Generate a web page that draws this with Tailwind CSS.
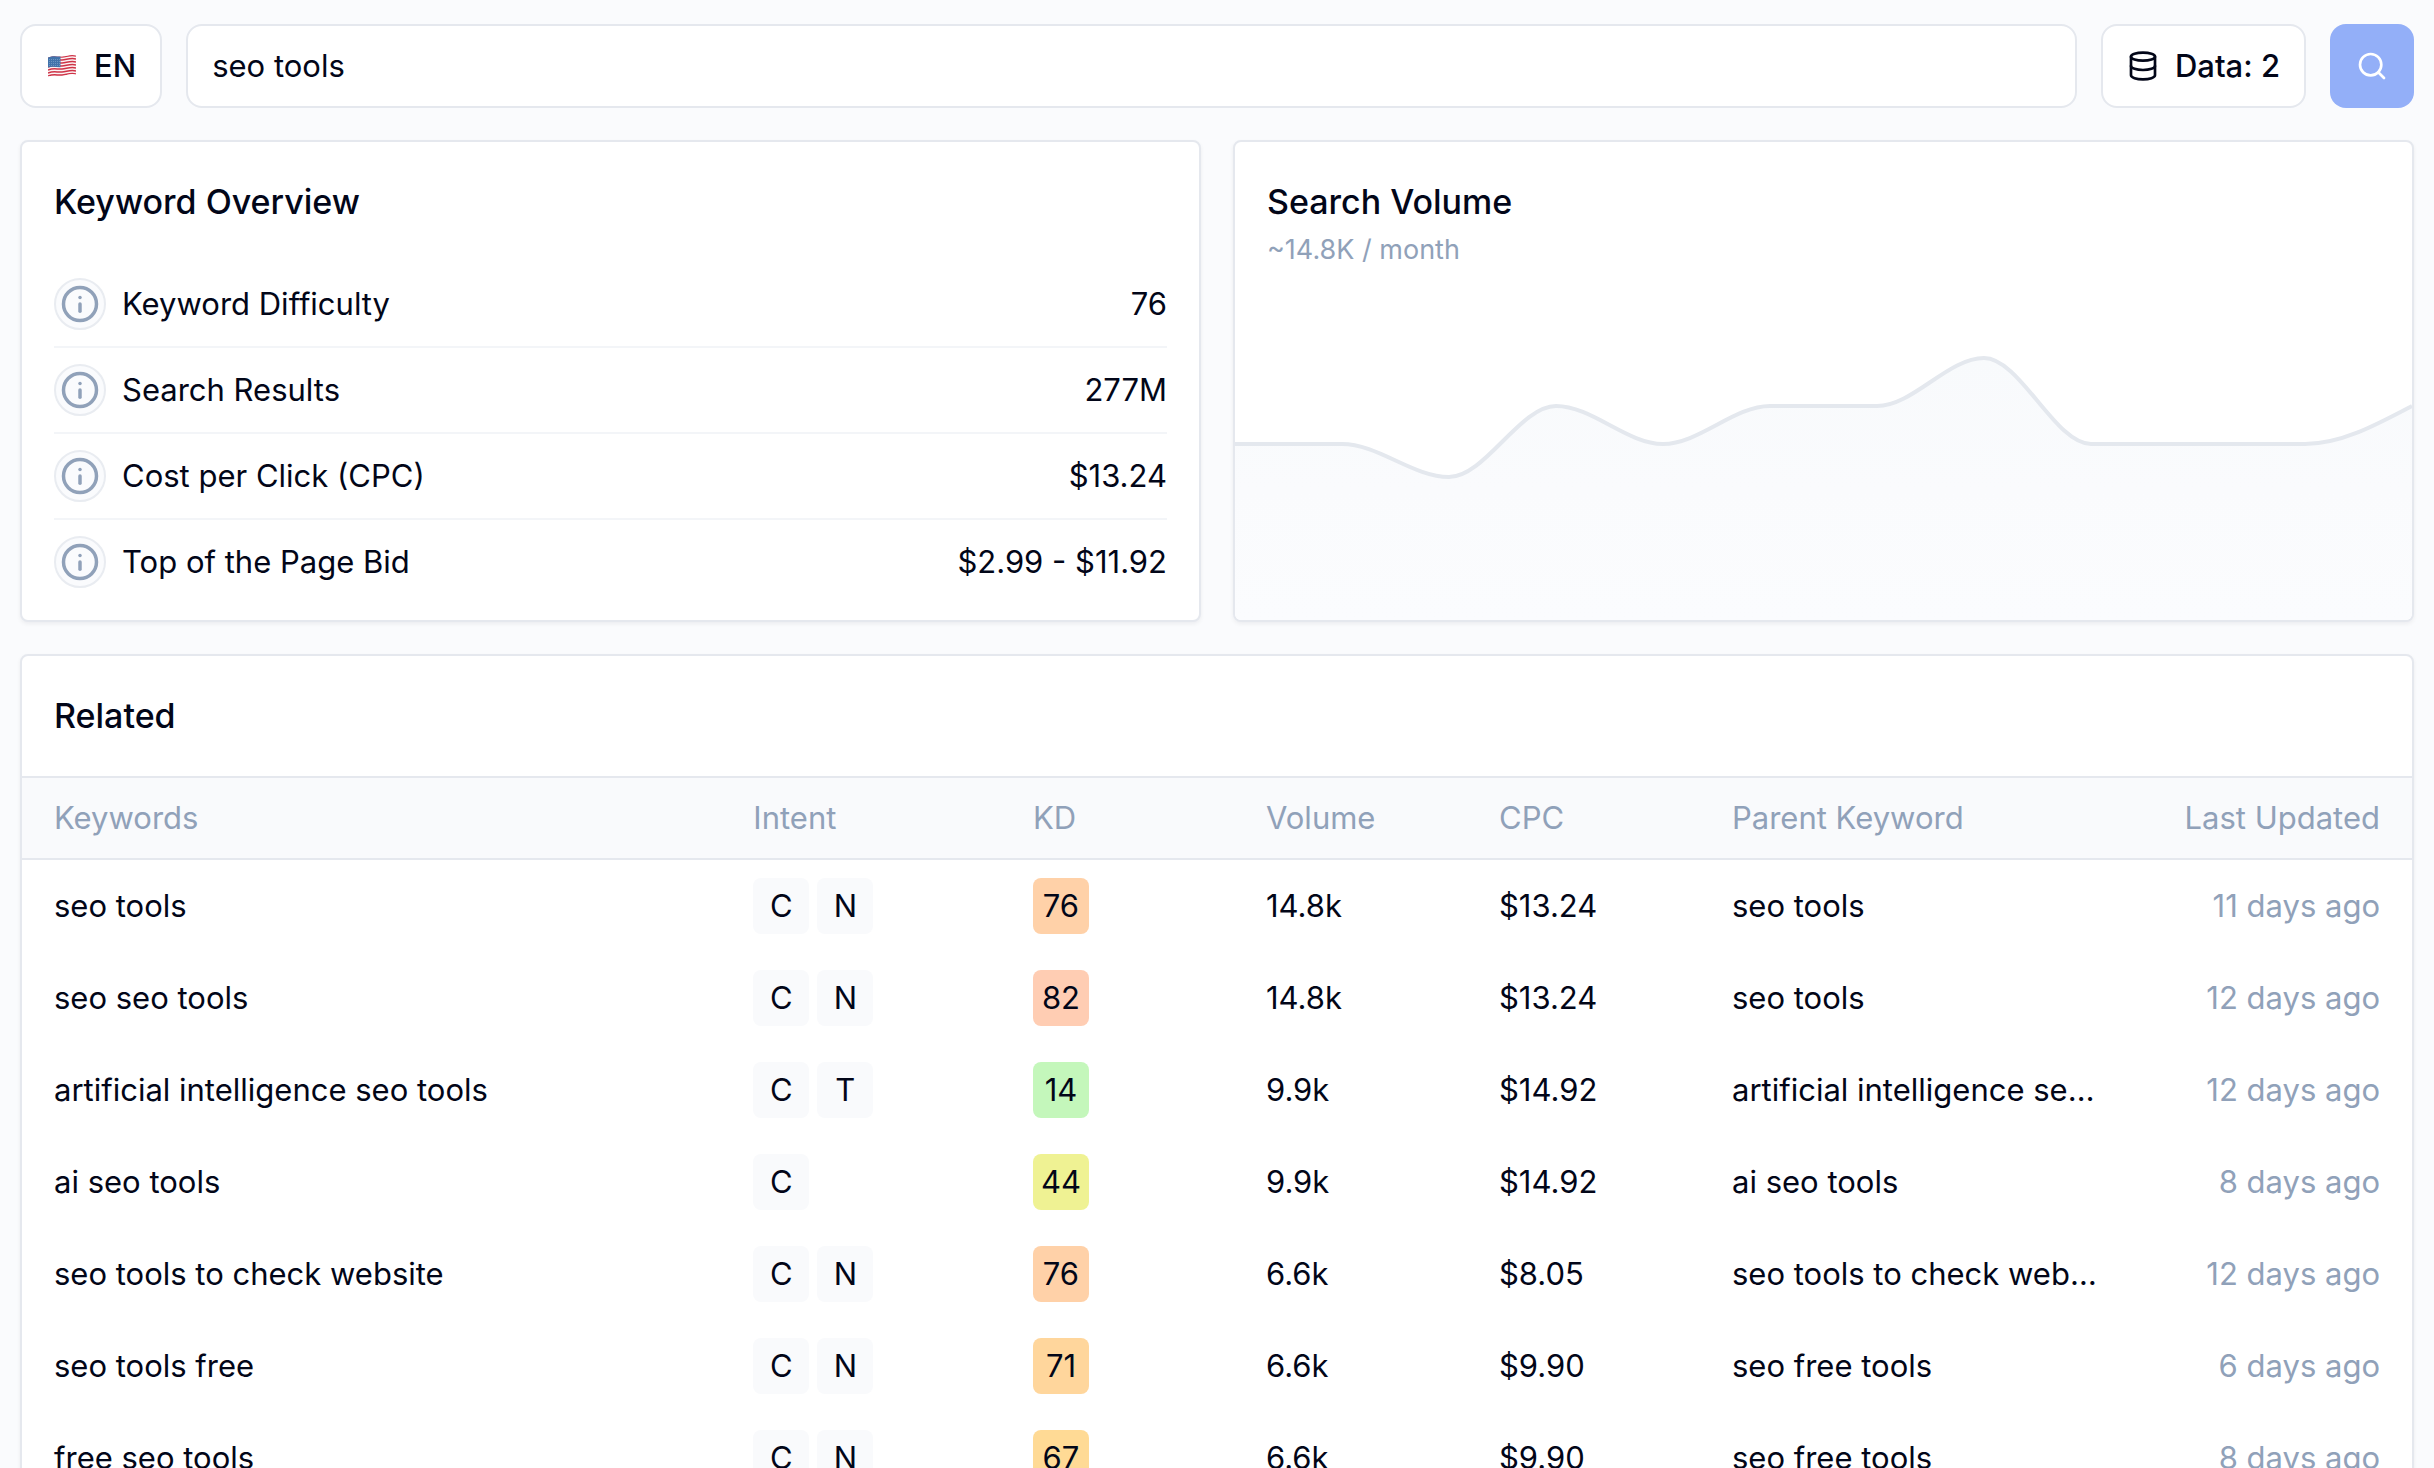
<!DOCTYPE html>
<html lang="en">
<head>
<meta charset="utf-8">
<meta name="viewport" content="width=device-width, initial-scale=1">
<title>Keyword Research</title>
<script src="https://cdn.jsdelivr.net/npm/@tailwindcss/browser@4"></script>
</head>
<body class="flex h-screen flex-col gap-8 overflow-hidden bg-[#fafbfd] px-5 pt-6 font-['Inter',sans-serif] text-[31px] leading-10 text-slate-950">

  <form class="flex h-[84px] shrink-0 gap-6">
    <button type="button" class="flex items-center gap-4 rounded-2xl border-2 border-[#e5e8ee] bg-white px-6 font-medium">
      <svg class="size-8" viewBox="0 0 32 32" aria-hidden="true">
        <defs><clipPath id="flag"><path d="M2 7.500C8 5 11 7 16 6.500S25 4 30 5.500V24.500C25 23 21 25 16 26S7 25 2 26.500Z"/></clipPath></defs>
        <g clip-path="url(#flag)">
          <rect width="32" height="32" fill="#fbf3f4"/>
          <g fill="none" stroke="#cf3347" stroke-width="1.500">
            <path d="M2 8C8 5.500 11 7.500 16 7S25 4.500 30 6"/>
            <path d="M2 11C8 8.500 11 10.500 16 10S25 7.500 30 9"/>
            <path d="M2 14C8 11.500 11 13.500 16 13S25 10.500 30 12"/>
            <path d="M2 17C8 14.500 11 16.500 16 16S25 13.500 30 15"/>
            <path d="M2 20C8 17.500 11 19.500 16 19S25 16.500 30 18"/>
            <path d="M2 23C8 20.500 11 22.500 16 22S25 19.500 30 21"/>
            <path d="M2 26C8 23.500 11 25.500 16 25S25 22.500 30 24"/>
          </g>
          <path d="M2 5H14.500V17.200C10 17.500 7 16 2 17.500Z" fill="#4173ab"/>
          <g fill="none" stroke="#8fb0d4" stroke-width=".7" stroke-dasharray=".8 1.200">
            <path d="M3 9.500H14M3 11.500H14M3 13.500H14M3 15.500H14"/>
          </g>
        </g>
      </svg>
      EN
    </button>
    <input type="text" value="seo tools" aria-label="Keyword" class="min-w-0 flex-1 rounded-2xl border-2 border-[#e5e8ee] bg-white px-6 outline-none">
    <button type="button" class="flex items-center gap-4 rounded-2xl border-2 border-[#e5e8ee] bg-white px-6 font-medium">
      <svg class="size-8" viewBox="0 0 24 24" fill="none" stroke="currentColor" stroke-width="2" stroke-linecap="round" stroke-linejoin="round" aria-hidden="true"><ellipse cx="12" cy="5" rx="9" ry="3"/><path d="M3 5V19A9 3 0 0 0 21 19V5"/><path d="M3 12A9 3 0 0 0 21 12"/></svg>
      Data: 2
    </button>
    <button type="submit" aria-label="Search" class="flex w-[84px] items-center justify-center rounded-2xl bg-[#93aff8] text-white">
      <svg class="size-8" viewBox="0 0 24 24" fill="none" stroke="currentColor" stroke-width="2" stroke-linecap="round" stroke-linejoin="round" aria-hidden="true"><circle cx="11" cy="11" r="8"/><path d="m21 21-4.300-4.300"/></svg>
    </button>
  </form>

  <div class="grid shrink-0 grid-cols-2 gap-8">
    <section class="rounded-lg border-2 border-[#e5e8ee] bg-white px-8 pb-4 shadow-[0_2px_4px_rgba(15,23,42,0.06)]">
      <h2 class="flex h-[120px] items-center text-[34px] leading-11 font-medium">Keyword Overview</h2>
      <dl id="overview" class="divide-y-2 divide-[#f3f5f8]"></dl>
    </section>

    <section class="flex flex-col overflow-hidden rounded-lg border-2 border-[#e5e8ee] bg-white shadow-[0_2px_4px_rgba(15,23,42,0.06)]">
      <div class="flex flex-col gap-2 px-8 pt-[38px]">
        <h2 class="text-[34px] leading-11 font-medium">Search Volume</h2>
        <p class="text-[27px] leading-9 text-slate-400">~14.8K / month</p>
      </div>
      <svg class="h-0 w-full flex-1" viewBox="0 0 1177 352" preserveAspectRatio="none" role="img" aria-label="Search volume per month">
        <defs><linearGradient id="area" x1="0" y1="0" x2="0" y2="1"><stop offset="0" stop-color="#f8fafc"/><stop offset=".5" stop-color="#fafbfd"/><stop offset="1" stop-color="#fbfcfe"/></linearGradient></defs>
        <path fill="url(#area)" d="M0 176H107C143 176 178 209 214 209S285 138 321 138S392 176 428 176S499 138 535 138H642C678 138 713 90 749 90S820 176 856 176H1070C1106 176 1141 157 1177 138V352H0Z"/>
        <path fill="none" stroke="#e4e8ee" stroke-width="4" d="M0 176H107C143 176 178 209 214 209S285 138 321 138S392 176 428 176S499 138 535 138H642C678 138 713 90 749 90S820 176 856 176H1070C1106 176 1141 157 1177 138"/>
      </svg>
    </section>
  </div>

  <section class="shrink-0 overflow-hidden rounded-lg border-2 border-[#e5e8ee] bg-white shadow-[0_2px_4px_rgba(15,23,42,0.06)]">
    <h2 class="flex h-[120px] items-center px-8 text-[34px] leading-11 font-medium">Related</h2>
    <table class="w-full table-fixed border-separate border-spacing-0 text-left">
      <thead class="bg-[#f9fafc] text-slate-400">
        <tr class="h-[84px] *:border-y-2 *:border-[#e5e8ee] *:font-normal">
          <th class="w-[30.6%] pl-8">Keywords</th>
          <th class="w-[11.7%]">Intent</th>
          <th class="w-[9.75%]">KD</th>
          <th class="w-[9.75%]">Volume</th>
          <th class="w-[9.75%]">CPC</th>
          <th class="w-[15.6%]">Parent Keyword</th>
          <th class="pr-8 text-right">Last Updated</th>
        </tr>
      </thead>
      <tbody id="rows"></tbody>
    </table>
  </section>

<script>
const overview = [
  ['Keyword Difficulty', '76'],
  ['Search Results', '277M'],
  ['Cost per Click (CPC)', '$13.24'],
  ['Top of the Page Bid', '$2.99 - $11.92'],
];
document.getElementById('overview').innerHTML = overview.map(([label, value]) => `
  <div class="flex items-center justify-between py-4">
    <dt class="flex items-center gap-4">
      <button type="button" aria-label="About ${label}" class="flex size-[52px] items-center justify-center rounded-full border-2 border-[#e9ecf1] bg-[#fafbfd] text-slate-400">
        <svg class="size-11 shrink-0" viewBox="0 0 24 24" fill="none" stroke="currentColor" stroke-width="1.9" stroke-linecap="round" stroke-linejoin="round" aria-hidden="true"><circle cx="12" cy="12" r="9"/><path d="M12 16v-4"/><path d="M12 8.500h.01"/></svg>
      </button>
      ${label}
    </dt>
    <dd>${value}</dd>
  </div>`).join('');

const rows = [
  ['seo tools', 'CN', 76, '#ffd1a8', '14.8k', '$13.24', 'seo tools', '11 days ago'],
  ['seo seo tools', 'CN', 82, '#ffcdb3', '14.8k', '$13.24', 'seo tools', '12 days ago'],
  ['artificial intelligence seo tools', 'CT', 14, '#c4f7bb', '9.9k', '$14.92', 'artificial intelligence seo tools', '12 days ago'],
  ['ai seo tools', 'C', 44, '#eff293', '9.9k', '$14.92', 'ai seo tools', '8 days ago'],
  ['seo tools to check website', 'CN', 76, '#ffd1a8', '6.6k', '$8.05', 'seo tools to check website', '12 days ago'],
  ['seo tools free', 'CN', 71, '#ffd69c', '6.6k', '$9.90', 'seo free tools', '6 days ago'],
  ['free seo tools', 'CN', 67, '#ffda95', '6.6k', '$9.90', 'seo free tools', '8 days ago'],
];
document.getElementById('rows').innerHTML = rows.map(([keyword, intent, kd, color, volume, cpc, parent, updated]) => `
  <tr class="h-[92px]">
    <td class="truncate pl-8">${keyword}</td>
    <td><div class="flex gap-2">${[...intent].map(i => `<span class="flex h-14 w-14 items-center justify-center rounded-lg bg-[#f9fafc]">${i}</span>`).join('')}</div></td>
    <td><span class="flex h-14 w-14 items-center justify-center rounded-lg" style="background-color:${color}">${kd}</span></td>
    <td>${volume}</td>
    <td>${cpc}</td>
    <td class="truncate">${parent}</td>
    <td class="pr-8 text-right text-slate-400">${updated}</td>
  </tr>`).join('');
</script>
</body>
</html>
